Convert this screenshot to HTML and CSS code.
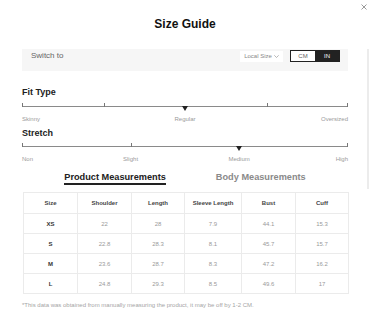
FILE: index.html
```html
<!DOCTYPE html>
<html lang="en">
<head>
<meta charset="utf-8">
<title>Size Guide</title>
<link rel="stylesheet" href="styles.css">
</head>
<body>
<div class="modal">
  <button class="close" aria-label="Close">
    <svg width="6" height="6" viewBox="0 0 6 6"><path d="M0.5 0.5L5.5 5.5M5.5 0.5L0.5 5.5" stroke="#9a9a9a" stroke-width="1" fill="none"/></svg>
  </button>
  <div class="scroll-thumb"></div>

  <h1 class="title">Size Guide</h1>

  <div class="switch-bar">
    <span class="switch-label">Switch to</span>
    <div class="switch-controls">
      <span class="local">Local Size
        <svg width="5" height="3" viewBox="0 0 5 3"><path d="M0.3 0.3L2.5 2.5L4.7 0.3" stroke="#999" stroke-width="0.7" fill="none"/></svg>
      </span>
      <div class="units">
        <span class="unit">CM</span>
        <span class="unit active">IN</span>
      </div>
    </div>
  </div>

  <section class="scale scale-fit">
    <h2 class="scale-title">Fit Type</h2>
    <div class="track">
      <span class="tick" style="left:0%"></span>
      <span class="tick" style="left:25%"></span>
      <span class="tick" style="left:75%"></span>
      <span class="tick" style="left:calc(100% - 1px)"></span>
      <span class="marker" style="left:50%"></span>
    </div>
    <div class="labels">
      <span class="label start" style="left:0%">Skinny</span>
      <span class="label mid" style="left:50%">Regular</span>
      <span class="label end" style="right:0">Oversized</span>
    </div>
  </section>

  <section class="scale scale-stretch">
    <h2 class="scale-title">Stretch</h2>
    <div class="track">
      <span class="tick" style="left:0%"></span>
      <span class="tick" style="left:33.3%"></span>
      <span class="tick" style="left:calc(100% - 1px)"></span>
      <span class="marker" style="left:66.6%"></span>
    </div>
    <div class="labels">
      <span class="label start" style="left:0%">Non</span>
      <span class="label mid" style="left:33.3%">Slight</span>
      <span class="label mid" style="left:66.6%">Medium</span>
      <span class="label end" style="right:0">High</span>
    </div>
  </section>

  <div class="tabs">
    <span class="tab active">Product Measurements</span>
    <span class="tab">Body Measurements</span>
  </div>

  <table class="size-table">
    <colgroup>
      <col class="c1"><col class="c2"><col class="c3"><col class="c4"><col class="c5"><col class="c6">
    </colgroup>
    <thead>
      <tr><th>Size</th><th>Shoulder</th><th>Length</th><th>Sleeve Length</th><th>Bust</th><th>Cuff</th></tr>
    </thead>
    <tbody>
      <tr><th>XS</th><td>22</td><td>28</td><td>7.9</td><td>44.1</td><td>15.3</td></tr>
      <tr><th>S</th><td>22.8</td><td>28.3</td><td>8.1</td><td>45.7</td><td>15.7</td></tr>
      <tr><th>M</th><td>23.6</td><td>28.7</td><td>8.3</td><td>47.2</td><td>16.2</td></tr>
      <tr><th>L</th><td>24.8</td><td>29.3</td><td>8.5</td><td>49.6</td><td>17</td></tr>
    </tbody>
  </table>

  <p class="note">*This data was obtained from manually measuring the product, it may be off by 1-2 CM.</p>
</div>
</body>
</html>
```

FILE: styles.css
```css
* { box-sizing: border-box; }

html, body {
  margin: 0;
  padding: 0;
  background: #fff;
}

body {
  font-family: "Liberation Sans", Arial, sans-serif;
  color: #222;
}

.modal {
  position: relative;
  width: 370px;
  padding: 17px 22px 0;
}

.close {
  position: absolute;
  top: 4px;
  right: 3px;
  width: 6px;
  height: 6px;
  padding: 0;
  border: 0;
  background: none;
  display: block;
}
.close svg { display: block; }

.scroll-thumb {
  position: absolute;
  top: 49px;
  right: 1px;
  width: 2px;
  height: 140px;
  background: #ececec;
}

.title {
  margin: 0;
  font-size: 12px;
  line-height: 14px;
  font-weight: bold;
  text-align: center;
  color: #111;
}

.switch-bar {
  margin-top: 18px;
  height: 22px;
  padding: 1px 8px 0 9px;
  background: #f6f6f6;
  display: flex;
  justify-content: space-between;
  align-items: flex-start;
}

.switch-label {
  font-size: 8px;
  line-height: 12px;
  color: #666;
}

.switch-controls {
  display: flex;
  align-items: flex-start;
  gap: 7px;
}

.local {
  margin-top: 1px;
  width: 43px;
  height: 11px;
  background: #fff;
  font-size: 6px;
  line-height: 11px;
  color: #888;
  display: flex;
  align-items: center;
  justify-content: center;
  gap: 2px;
}
.local svg { display: block; }

.units {
  width: 50px;
  height: 12px;
  border: 1px solid #222;
  display: flex;
}

.unit {
  flex: 1;
  text-align: center;
  font-size: 6px;
  line-height: 10px;
  color: #666;
  background: #fff;
}
.unit.active {
  background: #222;
  color: #fff;
}

.scale-title {
  margin: 0;
  font-size: 9px;
  line-height: 11px;
  font-weight: bold;
  color: #222;
}

.scale-fit { margin-top: 16px; }
.scale-stretch { margin-top: 5px; }

.track {
  position: relative;
  height: 1px;
  background: #8a8a8a;
}
.scale-fit .track { margin-top: 8px; }
.scale-stretch .track { margin-top: 7px; }

.tick {
  position: absolute;
  top: -3px;
  width: 1px;
  height: 4px;
  background: #777;
}

.marker {
  position: absolute;
  top: 0;
  width: 0;
  height: 0;
  border-left: 3px solid transparent;
  border-right: 3px solid transparent;
  border-top: 5px solid #222;
  transform: translateX(-50%);
}

.labels {
  position: relative;
  height: 8px;
  margin-top: 8px;
}

.label {
  position: absolute;
  top: 0;
  font-size: 6px;
  line-height: 8px;
  color: #9a9a9a;
  white-space: nowrap;
}
.label.mid { transform: translateX(-50%); }

.tabs {
  margin-top: 9px;
  display: flex;
  justify-content: center;
  gap: 50px;
}

.tab {
  font-size: 9.2px;
  line-height: 11px;
  font-weight: bold;
  color: #8a8a8a;
  border-bottom: 2px solid transparent;
}
.tab.active {
  color: #222;
  border-bottom-color: #222;
}

.size-table {
  margin-top: 7px;
  margin-left: 1px;
  width: 325px;
  border-collapse: collapse;
  table-layout: fixed;
}
.c1 { width: 54px; }
.c2 { width: 54px; }
.c3 { width: 53px; }
.c4 { width: 57px; }
.c5 { width: 54px; }
.c6 { width: 53px; }

.size-table th,
.size-table td {
  border: 1px solid #ebebeb;
  padding: 0;
  text-align: center;
  font-size: 6px;
  height: 20px;
}
.size-table thead th {
  height: 21px;
  font-weight: bold;
  color: #444;
}
.size-table tbody th {
  font-weight: bold;
  color: #333;
}
.size-table td {
  color: #9a9a9a;
}

.note {
  margin: 7px 0 0;
  font-size: 6px;
  line-height: 8px;
  color: #a5a5a5;
}
```
